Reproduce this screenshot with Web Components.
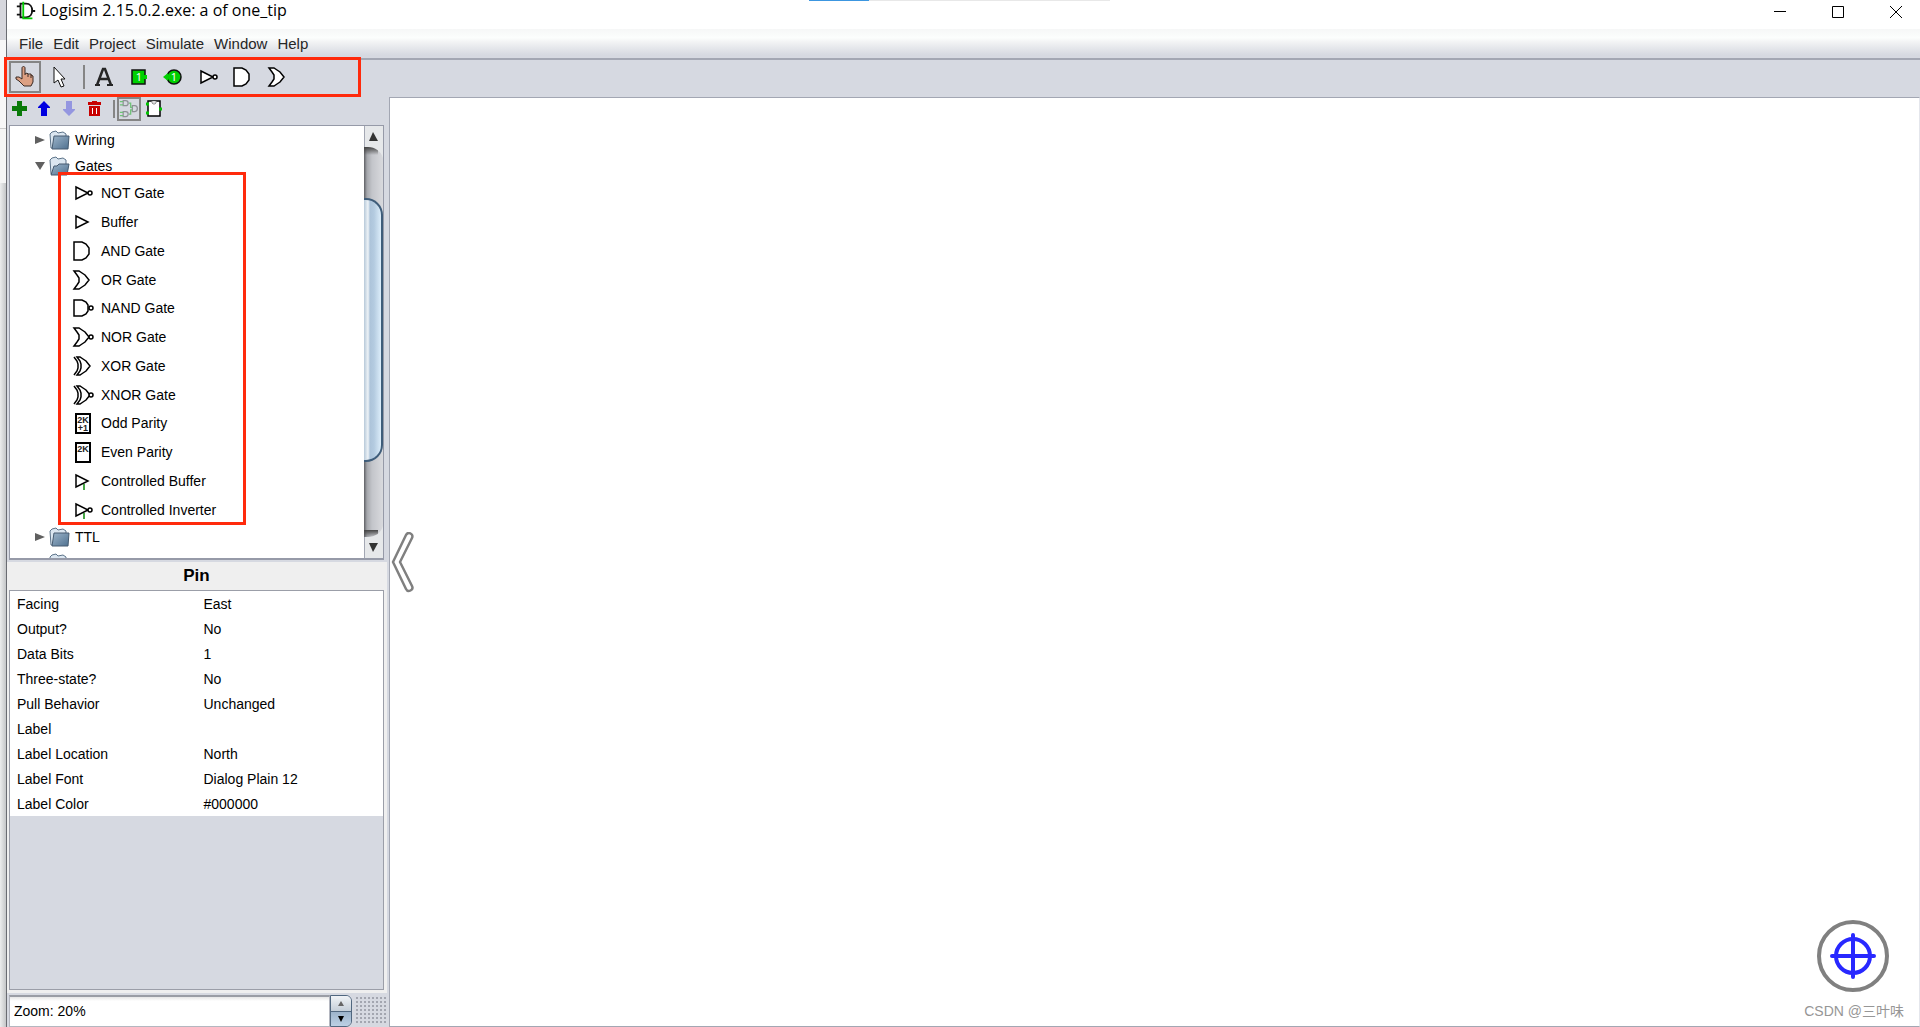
<!DOCTYPE html>
<html lang="en">
    <head>
        <meta charset="utf-8">
        <meta name="viewport" content="width=device-width, initial-scale=1.0">
        <title>Logisim 2.15.0.2.exe: a of one_tip</title>
        <style>
            body {
                margin: 0;
                font-family: "Liberation Sans", Arial, sans-serif;
                font-size: 14px;
                color: #000;
            }
        </style>
    </head>

    <body>
        <logisim-app></logisim-app>
    </body>

    <script>
        // gate bodies are shared by the toolbar and the explorer tree
        const OR_BODY = 'M2 3 H7 L10 5 L13 7 L17 12 L13 17 L10 19 L7 21 H2 L5 17 L7 14 V10 L5 7 Z'
        const XOR_BODY = 'M5 3 H8 L11 5 L14 7 L18 12 L14 17 L11 19 L8 21 H5 L8 17 L9 14 V10 L8 7 Z M2 3 L5 7 L6 10 V14 L5 17 L2 21'
        const FOLDER = `
            <path d="M2 6 L4 4 L8 3 L10 5 L15 4 L18 6 V20 H3 Z" fill="#dbe6f0" stroke="#5c7389"/>`

        const ICONS = {
            logo: `<g fill="none" stroke="#111" stroke-width="2"><path d="M6 4 H12 C21 4 21 19 12 19 H6 Z"/><path d="M2 7 H6 M2 16 H6 M18 12 H22"/></g><path d="M9 2 V20 H19" fill="none" stroke="#0c0" stroke-width="2"/>`,
            poke: `<path d="M9 14 V3 C9 1 12 1 12 3 V9 L14 8 L16 10 L18 9 L20 11 V17 L18 21 H11 L6 16 L3 14 V12 H6 Z" fill="#dca083"/><path d="M9 14 V3 C9 1 12 1 12 3 V10 M12 9 L14 8 L15 9 V12 M15 9 L18 9 V13 M18 10 L20 11 V17 L18 21 H11 L6 16 L3 14 V12 H6 L9 14" fill="none" stroke="#3a2a24"/>`,
            select: `<path d="M6 2 V18 L10 15 L13 22 L16 21 L13 14 H17 Z" fill="#fff" stroke="#111"/>`,
            text: `<path d="M5 20 L11 4 H13 L19 20 M7 14 H17" fill="none" stroke="#262626" stroke-width="2.5"/><path d="M3 20 H8 M15 20 H21" stroke="#262626" stroke-width="2"/>`,
            pinin: `<path d="M5 5 H18 V19 H5 Z" fill="#00d000" stroke="#111" stroke-width="1.5"/><path d="M17 10 H20 V14 H17 Z" fill="#00d000"/><text x="12" y="16" class="one">1</text>`,
            pinout: `<circle cx="12" cy="12" r="7" fill="#00d000" stroke="#111" stroke-width="1.5"/><path d="M1 12 L6 8 V16 Z" fill="#00d000"/><text x="12" y="16" class="one">1</text>`,
            not: `<path d="M4 6 L16 12 L4 18 Z" class="g"/><circle cx="18" cy="12" r="2" class="g"/>`,
            buffer: `<path d="M4 6 L16 12 L4 18 Z" class="g"/>`,
            and: `<path d="M2 3 H10 L14 5 L17 9 V15 L14 19 L10 21 H2 Z" class="g"/>`,
            or: `<path d="${OR_BODY}" class="g"/>`,
            nand: `<path d="M2 4 H10 L14 6 L16 9 V15 L14 18 L10 20 H2 Z" class="g"/><circle cx="19" cy="12" r="2" class="g"/>`,
            nor: `<path d="${OR_BODY}" class="g"/><circle cx="19" cy="12" r="2" class="g"/>`,
            xor: `<path d="${XOR_BODY}" class="g"/>`,
            xnor: `<path d="${XOR_BODY}" class="g"/><circle cx="19" cy="12" r="2" class="g"/>`,
            odd: `<path d="M4 3 H18 V22 H4 Z" fill="#fff" stroke="#000" stroke-width="2"/><text x="11" y="12" class="t">2K</text><text x="11" y="20" class="t">+1</text>`,
            even: `<path d="M4 3 H18 V22 H4 Z" fill="#fff" stroke="#000" stroke-width="2"/><text x="11" y="12" class="t">2K</text>`,
            cbuffer: `<path d="M4 6 L16 12 L4 18 Z" class="g"/><path d="M12 15 V21" stroke="#0a8a0a" stroke-width="1.5"/>`,
            cinverter: `<path d="M4 6 L16 12 L4 18 Z" class="g"/><circle cx="18" cy="12" r="2" class="g"/><path d="M12 15 V21" stroke="#0a8a0a" stroke-width="1.5"/>`,
            folder: FOLDER + `<path d="M6 8 H21 L20 21 H4 Z" fill="url(#f)" stroke="#465b70"/>`,
            open: FOLDER + `<path d="M6 12 H9 L11 10 H21 L19 21 H3 Z" fill="url(#f)" stroke="#465b70"/>`,
            add: `<path d="M9 4 H14 V9 H19 V14 H14 V19 H9 V14 H4 V9 H9 Z" fill="#0a7a0a"/>`,
            up: `<path d="M11 4 L17 10 V11 H14 V19 H8 V11 H5 V10 Z" fill="#0000e0"/>`,
            down: `<path d="M11 19 L17 13 V12 H14 V4 H8 V12 H5 V13 Z" fill="#9496e0"/>`,
            trash: `<path d="M9 4 H14 V5 H18 V8 H5 V5 H9 Z M6 9 H17 V19 H6 Z" fill="#c80000"/><path d="M9.500 11 V17 M13.500 11 V17" stroke="#fff"/>`,
            circuit: `<g fill="none" stroke="#8e9196" stroke-width="1.5"><path d="M5 2 H8 C12 2 12 8 8 8 H5 Z M5 15 H8 C12 15 12 21 8 21 H5 Z M16 8 H19 C23 8 23 15 19 15 H16 Z"/></g><path d="M1 3 H5 M1 7 H5 M1 16 H5 M1 20 H5 M12 5 H14 V10 H16 M12 18 H14 V13 H16" fill="none" stroke="#6fc278" stroke-width="1.5"/>`,
            chip: `<path d="M6 4 H18 V19 H6 Z" fill="#fff" stroke="#000" stroke-width="1.5"/><path d="M10 4 V6 L11 7 H13 L14 6 V4" fill="#ddd" stroke="#999"/><path d="M4 7 H7 M4 16 H7 M17 12 H20" stroke="#00c400" stroke-width="3"/>`
        }

        class LgIcon extends HTMLElement {
            constructor() {
                super()
                this.attachShadow({ mode: 'open' })
            }

            connectedCallback() {
                this.shadowRoot.innerHTML = `
                <style>
                    :host { display: block; width: 24px; height: 24px; flex: none; }
                    svg { display: block; width: 100%; height: 100%; }
                    .g { fill: #fff; stroke: #000; stroke-width: 1.5; }
                    .t { font: bold 9px "Liberation Sans", sans-serif; text-anchor: middle; fill: #222; }
                    .one { font: 11px "Noto Sans", sans-serif; text-anchor: middle; fill: #fff; }
                </style>
                <svg viewBox="0 0 24 24" aria-hidden="true">
                    <linearGradient id="f" x1="0" y1="0" x2="1" y2="1">
                        <stop offset="0" stop-color="#9db5ca"/>
                        <stop offset="1" stop-color="#4f708f"/>
                    </linearGradient>
                    ${ICONS[this.getAttribute('name')]}
                </svg>
                `
            }
        }

        class TitleBar extends HTMLElement {
            constructor() {
                super()
                this.attachShadow({ mode: 'open' })
                this.shadowRoot.innerHTML = `
                <style>
                    :host { display: flex; height: 29px; padding-left: 8px; background: #fff; align-items: flex-start; }
                    lg-icon { width: 22px; height: 22px; }
                    h1 { flex: 1; margin: 0; padding-left: 4px; font: 16px/20px "Open Sans", "Noto Sans", sans-serif; color: #000; }
                    .buttons { display: flex; gap: 10px; }
                    button { width: 48px; height: 20px; padding: 0; border: 0; background: none; }
                    svg { display: block; margin: 4px auto 0; width: 12px; height: 12px; overflow: visible; fill: none; stroke: #000; }
                </style>
                <lg-icon name="logo"></lg-icon>
                <h1><slot></slot></h1>
                <div class="buttons">
                    <button aria-label="Minimize"><svg><path d="M0 5.500 H12"/></svg></button>
                    <button aria-label="Maximize"><svg><path d="M.5 .5 H11.500 V11.500 H.5 Z"/></svg></button>
                    <button aria-label="Close"><svg><path d="M0 0 L12 12 M12 0 L0 12"/></svg></button>
                </div>
                `
            }
        }

        class MenuBar extends HTMLElement {
            constructor() {
                super()
                this.attachShadow({ mode: 'open' })
                const items = ['File', 'Edit', 'Project', 'Simulate', 'Window', 'Help']
                this.shadowRoot.innerHTML = `
                <style>
                    :host {
                        display: flex; gap: 10px; height: 29px; padding: 0 12px;
                        align-items: center; border-bottom: 2px solid #a3a7b3;
                        background: linear-gradient(#f6f7f7, #fcfefd 30%, #f2f3f4 45%, #d6d9e1 90%);
                    }
                    button { padding: 0; border: 0; background: none; font: inherit; font-size: 15px; line-height: 20px; color: #262626; }
                </style>
                ${items.map(item => `<button>${item}</button>`).join('')}
                `
            }
        }

        class ToolBar extends HTMLElement {
            constructor() {
                super()
                this.attachShadow({ mode: 'open' })
                const tool = (name, label) => `<button aria-label="${label}"><lg-icon name="${name}"></lg-icon></button>`
                this.shadowRoot.innerHTML = `
                <style>
                    :host { display: flex; gap: 3px; height: 36px; padding: 1px 2px 0; position: relative; }
                    button { box-sizing: border-box; width: 32px; height: 32px; padding: 2px; border: 2px solid transparent; background: none; }
                    .on { border-color: #858585; }
                    .line { width: 2px; height: 24px; margin: 4px 0 0 4px; background: #858585; }
                    .mark { position: absolute; left: -3px; top: -3px; width: 351px; height: 34px; border: 3px solid #ff2a0c; }
                </style>
                <button class="on" aria-label="Poke"><lg-icon name="poke"></lg-icon></button>
                ${tool('select', 'Select')}
                <div class="line"></div>
                ${tool('text', 'Text')}
                ${tool('pinin', 'Input pin')}
                ${tool('pinout', 'Output pin')}
                ${tool('not', 'NOT gate')}
                ${tool('and', 'AND gate')}
                ${tool('or', 'OR gate')}
                <div class="mark"></div>
                `
            }
        }

        class ExplorerTools extends HTMLElement {
            constructor() {
                super()
                this.attachShadow({ mode: 'open' })
                this.shadowRoot.innerHTML = `
                <style>
                    :host { display: flex; gap: 1px; height: 28px; padding-left: 1px; }
                    button { box-sizing: border-box; width: 24px; height: 24px; padding: 0; border: 0; background: none; }
                    .line { width: 2px; height: 18px; margin: 3px 1px 0 5px; background: #858585; }
                    .on { border: 2px solid #858585; }
                    .on lg-icon { width: 20px; height: 20px; }
                </style>
                <button aria-label="Add circuit"><lg-icon name="add"></lg-icon></button>
                <button aria-label="Move up"><lg-icon name="up"></lg-icon></button>
                <button aria-label="Move down"><lg-icon name="down"></lg-icon></button>
                <button aria-label="Delete"><lg-icon name="trash"></lg-icon></button>
                <div class="line"></div>
                <button class="on" aria-label="Edit layout"><lg-icon name="circuit"></lg-icon></button>
                <button aria-label="Edit appearance"><lg-icon name="chip"></lg-icon></button>
                `
            }
        }

        class ScrollBar extends HTMLElement {
            constructor() {
                super()
                this.attachShadow({ mode: 'open' })
                this.shadowRoot.innerHTML = `
                <style>
                    :host {
                        display: flex; flex-direction: column; width: 19px; flex: none;
                        background: linear-gradient(90deg, #5f6064, #a5a7ac 3px, #c3c5ca 8px, #d9dade);
                    }
                    button { height: 32px; padding: 0; border: 0; background: none; flex: none; }
                    svg { display: block; }
                    .thumb {
                        flex: 1; margin: 40px 0 64px; border: 2px solid #3f5d7a; border-left: 0;
                        border-radius: 0 17px 17px 0;
                        background: linear-gradient(90deg, #b7c9d9, #eef3f7 4px, #adc4da 6px, #b4cbe0 10px, #dcedfa);
                    }
                </style>
                <button aria-label="Scroll up">
                    <svg width="19" height="32">
                        <defs><linearGradient id="s" x1="0" y1="0" x2="0" y2="1"><stop offset="0" stop-color="#444"/><stop offset="1" stop-color="#444" stop-opacity="0"/></linearGradient></defs>
                        <path d="M0 21 H14 V29 H0 Z" fill="url(#s)"/>
                        <path d="M0 0 H19 V32 C17 25 11 21 4 21 H0 Z" fill="#e6e8ea"/>
                        <path d="M.5 0 V21" stroke="#a3a7b3"/>
                        <path d="M5 15 L9 6 L14 15 Z" fill="#333"/>
                    </svg>
                </button>
                <div class="thumb"></div>
                <button aria-label="Scroll down">
                    <svg width="19" height="32">
                        <defs><linearGradient id="s" x1="0" y1="1" x2="0" y2="0"><stop offset="0" stop-color="#444"/><stop offset="1" stop-color="#444" stop-opacity="0"/></linearGradient></defs>
                        <path d="M0 4 H14 V11 H0 Z" fill="url(#s)"/>
                        <path d="M0 32 H19 V0 C17 7 11 11 4 11 H0 Z" fill="#e6e8ea"/>
                        <path d="M.5 11 V32" stroke="#a3a7b3"/>
                        <path d="M5 17 L9 26 L14 17 Z" fill="#333"/>
                    </svg>
                </button>
                `
            }
        }

        class ExplorerTree extends HTMLElement {
            constructor() {
                super()
                this.attachShadow({ mode: 'open' })
                const gates = [
                    ['not', 'NOT Gate'], ['buffer', 'Buffer'], ['and', 'AND Gate'], ['or', 'OR Gate'],
                    ['nand', 'NAND Gate'], ['nor', 'NOR Gate'], ['xor', 'XOR Gate'], ['xnor', 'XNOR Gate'],
                    ['odd', 'Odd Parity'], ['even', 'Even Parity'],
                    ['cbuffer', 'Controlled Buffer'], ['cinverter', 'Controlled Inverter']
                ]
                this.shadowRoot.innerHTML = `
                <style>
                    :host { display: flex; border: 1px solid #969aa8; border-bottom-width: 2px; background: #fff; overflow: hidden; }
                    ul { list-style: none; margin: 0; padding: 0; }
                    .tree { flex: 1; padding-top: 1px; }
                    .folder { display: flex; align-items: center; height: 26px; padding-left: 24px; gap: 3px; }
                    .folder svg { width: 11px; height: 12px; fill: #606060; }
                    .gates { display: flex; flex-direction: column; height: 345px; position: relative; }
                    .gates li { flex: 1; display: flex; align-items: center; gap: 5px; padding-left: 62px; }
                    .mark { position: absolute; left: 48px; top: -7px; width: 182px; height: 347px; border: 3px solid #ff2a0c; }
                </style>
                <ul class="tree">
                    <li class="folder"><svg><path d="M1 2 L11 6 L1 10 Z"/></svg><lg-icon name="folder"></lg-icon>Wiring</li>
                    <li>
                        <div class="folder"><svg><path d="M1 2 H11 L6 10 Z"/></svg><lg-icon name="open"></lg-icon>Gates</div>
                        <ul class="gates">
                            ${gates.map(([icon, name]) => `<li><lg-icon name="${icon}"></lg-icon>${name}</li>`).join('')}
                            <div class="mark"></div>
                        </ul>
                    </li>
                    <li class="folder"><svg><path d="M1 2 L11 6 L1 10 Z"/></svg><lg-icon name="folder"></lg-icon>TTL</li>
                    <li class="folder"><svg></svg><lg-icon name="folder"></lg-icon></li>
                </ul>
                <scroll-bar></scroll-bar>
                `
            }
        }

        class AttributeTable extends HTMLElement {
            constructor() {
                super()
                this.attachShadow({ mode: 'open' })
                const rows = [
                    ['Facing', 'East'], ['Output?', 'No'], ['Data Bits', '1'], ['Three-state?', 'No'],
                    ['Pull Behavior', 'Unchanged'], ['Label', ''], ['Label Location', 'North'],
                    ['Label Font', 'Dialog Plain 12'], ['Label Color', '#000000']
                ]
                this.shadowRoot.innerHTML = `
                <style>
                    :host { display: flex; flex-direction: column; background: #efefef; padding: 0 3px 3px 2px; }
                    h2 { margin: 0; height: 28px; font-size: 17px; line-height: 27px; text-align: center; color: #000; }
                    .box { flex: 1; border: 1px solid #9b9ea8; background: #d6d9e1; }
                    table { width: 100%; border-collapse: collapse; table-layout: fixed; background: #fff; }
                    th, td { height: 25px; padding: 0 0 0 7px; line-height: 20px; text-align: left; font-weight: normal; }
                </style>
                <h2>Pin</h2>
                <div class="box">
                    <table>
                        ${rows.map(([name, value]) => `<tr><th scope="row">${name}</th><td>${value}</td></tr>`).join('')}
                    </table>
                </div>
                `
            }
        }

        class ZoomControl extends HTMLElement {
            constructor() {
                super()
                this.attachShadow({ mode: 'open' })
                this.shadowRoot.innerHTML = `
                <style>
                    :host { display: flex; height: 32px; }
                    input {
                        box-sizing: border-box; flex: 1; min-width: 0; height: 32px; padding: 0 4px 2px; border: 1px solid #b4b7c0;
                        border-top: 2px solid #9a9da5; background: linear-gradient(#e6e6e6, #fff 4px);
                        font: inherit; color: #000;
                    }
                    .spin { display: flex; flex-direction: column; width: 22px; border: 1px solid #50677f; border-radius: 0 6px 6px 0; box-sizing: border-box; overflow: hidden; }
                    button { flex: 1; padding: 0; border: 0; background: linear-gradient(#f0f3f6, #c5cfd9); }
                    button + button { border-top: 1px solid #50677f; background: linear-gradient(#9db4cb, #bcd0e4); }
                    svg { display: block; margin: 0 auto; width: 6px; height: 6px; }
                    .grip { width: 30px; margin: 2px 1px 2px 4px; background: radial-gradient(circle at 1px 1px, #a3a6b0 1px, transparent 1px) 0 0 / 4px 4px; }
                </style>
                <input type="text" aria-label="Zoom" value="Zoom: 20%">
                <div class="spin">
                    <button aria-label="Zoom in"><svg fill="#666"><path d="M0 6 L3 1 L6 6 Z"/></svg></button>
                    <button aria-label="Zoom out"><svg><path d="M0 0 L3 6 L6 0 Z"/></svg></button>
                </div>
                <div class="grip"></div>
                `
            }
        }

        class CircuitCanvas extends HTMLElement {
            constructor() {
                super()
                this.attachShadow({ mode: 'open' })
                this.shadowRoot.innerHTML = `
                <style>
                    :host { display: flex; justify-content: space-between; border: 1px solid #a3a7b3; border-right-color: #e4e6ec; background: #fff; }
                    button { display: block; padding: 0; border: 0; background: none; }
                    .back { margin: 434px 0 0 1px; align-self: flex-start; }
                    .corner { align-self: flex-end; display: flex; flex-direction: column; align-items: center; padding: 0 15px 5px; }
                    svg { display: block; fill: none; stroke: #808080; stroke-width: 3; }
                    .credit { margin-top: 8px; font: 14px/20px "Liberation Sans", "Noto Sans CJK SC", sans-serif; color: #969696; }
                </style>
                <button class="back" aria-label="Back">
                    <svg width="24" height="62"><path d="M15 3 L2 30 L15 57 C17 61 23 58 21 54 L9 30 L21 6 C23 2 17 -1 15 3 Z" stroke-width="2.5" stroke-linejoin="round"/></svg>
                </button>
                <div class="corner">
                    <button aria-label="Center view">
                        <svg width="74" height="74">
                            <circle cx="36" cy="37" r="34" stroke-width="4"/>
                            <g stroke="#2828ff" stroke-width="4" stroke-linecap="round"><circle cx="36" cy="37" r="17"/><path d="M36 16 V58 M15 37 H57"/></g>
                        </svg>
                    </button>
                    <div class="credit">CSDN @三叶味</div>
                </div>
                `
            }
        }

        class LogisimApp extends HTMLElement {
            constructor() {
                super()
                this.attachShadow({ mode: 'open' })
                this.shadowRoot.innerHTML = `
                <style>
                    :host { display: grid; grid-template-columns: 6px 1fr; min-height: 100vh; position: relative; }
                    .behind { background: linear-gradient(#d6d7dd 40px, #f7f7f7 40px, #f7f7f7 128px, #ccc 128px, #ccc 129px, #f5f5f5 129px, #f5f5f5 183px, transparent 183px), linear-gradient(90deg, #eceded, #c4c6c8); }
                    .window { display: flex; flex-direction: column; min-width: 0; border-left: 1px solid #6a6c72; background: #d6d9e1; }
                    .main { flex: 1; display: grid; grid-template-columns: 382px 1fr; }
                    .side { display: flex; flex-direction: column; }
                    explorer-tree { flex: 0 1 435px; box-sizing: border-box; min-height: 0; height: 435px; margin: 0 5px 2px 2px; }
                    attribute-table { flex: 1; margin-right: 2px; }
                    zoom-control { margin: 2px 2px 0; }
                    .progress { position: absolute; top: 0; left: 50%; width: 301px; height: 1px; margin-left: -151px; background: linear-gradient(90deg, #3c96e0 60px, #e8e8e8 60px); }
                </style>
                <div class="behind"></div>
                <div class="window">
                    <title-bar>Logisim 2.15.0.2.exe: a of one_tip</title-bar>
                    <menu-bar></menu-bar>
                    <tool-bar></tool-bar>
                    <div class="main">
                        <div class="side">
                            <explorer-tools></explorer-tools>
                            <explorer-tree></explorer-tree>
                            <attribute-table></attribute-table>
                            <zoom-control></zoom-control>
                        </div>
                        <circuit-canvas></circuit-canvas>
                    </div>
                </div>
                <div class="progress"></div>
                `
            }
        }

        customElements.define("lg-icon", LgIcon)
        customElements.define("title-bar", TitleBar)
        customElements.define("menu-bar", MenuBar)
        customElements.define("tool-bar", ToolBar)
        customElements.define("explorer-tools", ExplorerTools)
        customElements.define("scroll-bar", ScrollBar)
        customElements.define("explorer-tree", ExplorerTree)
        customElements.define("attribute-table", AttributeTable)
        customElements.define("zoom-control", ZoomControl)
        customElements.define("circuit-canvas", CircuitCanvas)
        customElements.define("logisim-app", LogisimApp)
    </script>
</html>
